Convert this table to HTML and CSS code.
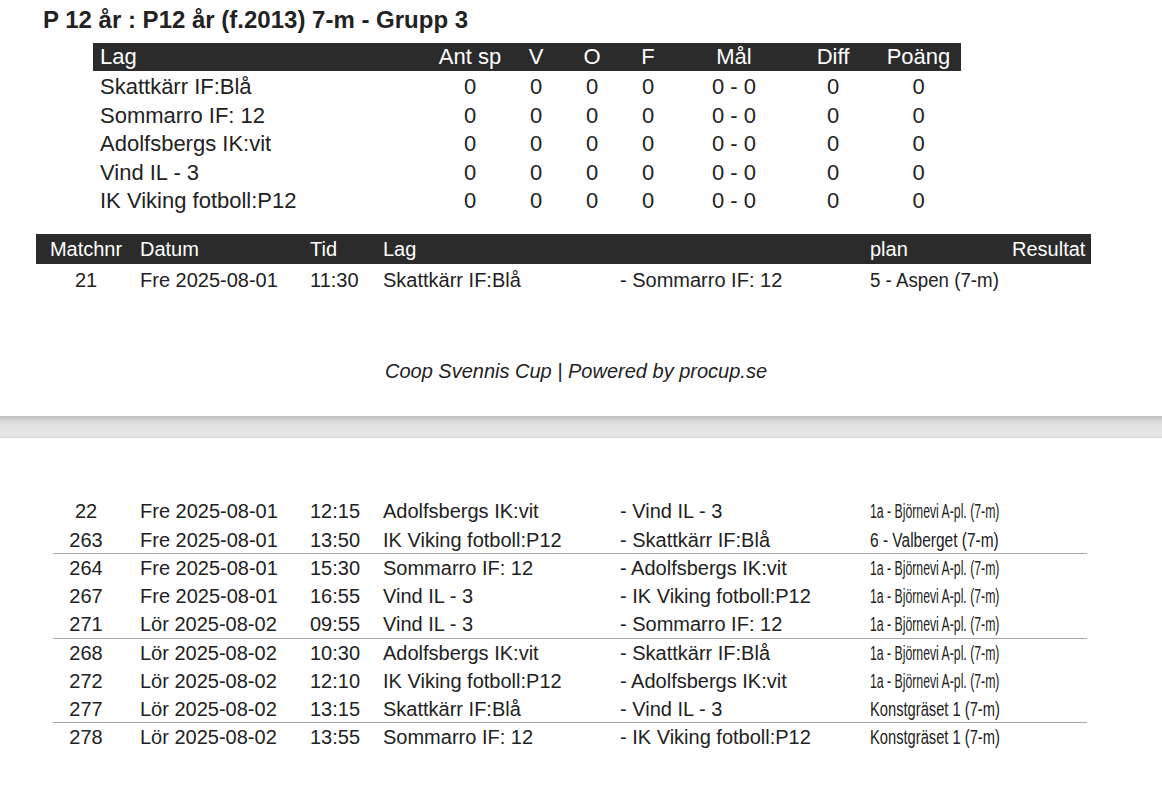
FILE: index.html
```html
<!DOCTYPE html>
<html lang="sv">
<head>
<meta charset="utf-8">
<title>P 12 år : P12 år (f.2013) 7-m - Grupp 3</title>
<link rel="stylesheet" href="styles.css">
</head>
<body>
<section class="page page-one">
  <h1 class="title">P 12 år : P12 år (f.2013) 7-m - Grupp 3</h1>

  <div class="standings">
    <div class="st-row st-head">
      <div class="c-team">Lag</div><div>Ant sp</div><div>V</div><div>O</div><div>F</div><div>Mål</div><div>Diff</div><div>Poäng</div>
    </div>
    <div class="st-body">
      <div class="st-row"><div class="c-team">Skattkärr IF:Blå</div><div>0</div><div>0</div><div>0</div><div>0</div><div>0 - 0</div><div>0</div><div>0</div></div>
      <div class="st-row"><div class="c-team">Sommarro IF: 12</div><div>0</div><div>0</div><div>0</div><div>0</div><div>0 - 0</div><div>0</div><div>0</div></div>
      <div class="st-row"><div class="c-team">Adolfsbergs IK:vit</div><div>0</div><div>0</div><div>0</div><div>0</div><div>0 - 0</div><div>0</div><div>0</div></div>
      <div class="st-row"><div class="c-team">Vind IL - 3</div><div>0</div><div>0</div><div>0</div><div>0</div><div>0 - 0</div><div>0</div><div>0</div></div>
      <div class="st-row"><div class="c-team">IK Viking fotboll:P12</div><div>0</div><div>0</div><div>0</div><div>0</div><div>0 - 0</div><div>0</div><div>0</div></div>
    </div>
  </div>

  <div class="matches">
    <div class="m-row m-head">
      <div class="c-nr">Matchnr</div><div class="c-date">Datum</div><div class="c-time">Tid</div><div class="c-home">Lag</div><div class="c-away"></div><div class="c-plan">plan</div><div class="c-res">Resultat</div>
    </div>
    <div class="m-body first-body">
      <div class="m-row"><div class="c-nr">21</div><div class="c-date">Fre 2025-08-01</div><div class="c-time">11:30</div><div class="c-home">Skattkärr IF:Blå</div><div class="c-away">- Sommarro IF: 12</div><div class="c-plan"><span class="fit fit-aspen">5 - Aspen (7-m)</span></div><div class="c-res"></div></div>
    </div>
  </div>

  <p class="footer">Coop Svennis Cup | Powered by procup.se</p>
</section>

<div class="page-break"></div>

<section class="page page-two">
  <div class="matches">
    <div class="m-body">
      <div class="m-row"><div class="c-nr">22</div><div class="c-date">Fre 2025-08-01</div><div class="c-time">12:15</div><div class="c-home">Adolfsbergs IK:vit</div><div class="c-away">- Vind IL - 3</div><div class="c-plan"><span class="fit fit-bjornevi">1a - Björnevi A-pl. (7-m)</span></div><div class="c-res"></div></div>
      <div class="m-row group-end"><div class="c-nr">263</div><div class="c-date">Fre 2025-08-01</div><div class="c-time">13:50</div><div class="c-home">IK Viking fotboll:P12</div><div class="c-away">- Skattkärr IF:Blå</div><div class="c-plan"><span class="fit fit-valberget">6 - Valberget (7-m)</span></div><div class="c-res"></div></div>
      <div class="m-row"><div class="c-nr">264</div><div class="c-date">Fre 2025-08-01</div><div class="c-time">15:30</div><div class="c-home">Sommarro IF: 12</div><div class="c-away">- Adolfsbergs IK:vit</div><div class="c-plan"><span class="fit fit-bjornevi">1a - Björnevi A-pl. (7-m)</span></div><div class="c-res"></div></div>
      <div class="m-row"><div class="c-nr">267</div><div class="c-date">Fre 2025-08-01</div><div class="c-time">16:55</div><div class="c-home">Vind IL - 3</div><div class="c-away">- IK Viking fotboll:P12</div><div class="c-plan"><span class="fit fit-bjornevi">1a - Björnevi A-pl. (7-m)</span></div><div class="c-res"></div></div>
      <div class="m-row group-end"><div class="c-nr">271</div><div class="c-date">Lör 2025-08-02</div><div class="c-time">09:55</div><div class="c-home">Vind IL - 3</div><div class="c-away">- Sommarro IF: 12</div><div class="c-plan"><span class="fit fit-bjornevi">1a - Björnevi A-pl. (7-m)</span></div><div class="c-res"></div></div>
      <div class="m-row"><div class="c-nr">268</div><div class="c-date">Lör 2025-08-02</div><div class="c-time">10:30</div><div class="c-home">Adolfsbergs IK:vit</div><div class="c-away">- Skattkärr IF:Blå</div><div class="c-plan"><span class="fit fit-bjornevi">1a - Björnevi A-pl. (7-m)</span></div><div class="c-res"></div></div>
      <div class="m-row"><div class="c-nr">272</div><div class="c-date">Lör 2025-08-02</div><div class="c-time">12:10</div><div class="c-home">IK Viking fotboll:P12</div><div class="c-away">- Adolfsbergs IK:vit</div><div class="c-plan"><span class="fit fit-bjornevi">1a - Björnevi A-pl. (7-m)</span></div><div class="c-res"></div></div>
      <div class="m-row group-end"><div class="c-nr">277</div><div class="c-date">Lör 2025-08-02</div><div class="c-time">13:15</div><div class="c-home">Skattkärr IF:Blå</div><div class="c-away">- Vind IL - 3</div><div class="c-plan"><span class="fit fit-konst">Konstgräset 1 (7-m)</span></div><div class="c-res"></div></div>
      <div class="m-row"><div class="c-nr">278</div><div class="c-date">Lör 2025-08-02</div><div class="c-time">13:55</div><div class="c-home">Sommarro IF: 12</div><div class="c-away">- IK Viking fotboll:P12</div><div class="c-plan"><span class="fit fit-konst">Konstgräset 1 (7-m)</span></div><div class="c-res"></div></div>
    </div>
  </div>
</section>
</body>
</html>
```

FILE: styles.css
```css
html, body {
  margin: 0;
  padding: 0;
  background: #ffffff;
}

body {
  font-family: "Liberation Sans", Arial, Helvetica, sans-serif;
  color: #222222;
  width: 1162px;
}

.page-one {
  padding-top: 6px;
}

.title {
  margin: 0 0 0 43px;
  font-size: 24px;
  line-height: 28px;
  font-weight: bold;
  color: #222222;
}

/* Standings table */
.standings {
  margin: 9px 0 0 93px;
  width: 868px;
  font-size: 22px;
}

.st-row {
  display: grid;
  grid-template-columns: 341px 72px 60px 52px 60px 112px 86px 85px;
  line-height: 28.5px;
  height: 28.5px;
  text-align: center;
  white-space: nowrap;
}

.st-row .c-team {
  text-align: left;
  padding-left: 7px;
}

.st-head {
  background: #2b2b2b;
  color: #ffffff;
  height: 28px;
  line-height: 28px;
}

.st-body {
  margin-top: 2px;
}

/* Match table */
.matches {
  margin-left: 36px;
  width: 1055px;
  font-size: 20px;
}

.page-one .matches {
  margin-top: 18.5px;
}

.m-row {
  display: grid;
  grid-template-columns: 100px 170px 73px 237px 250px 146px 79px;
  height: 28.25px;
  line-height: 28.25px;
  white-space: nowrap;
}

.m-head {
  background: #2b2b2b;
  color: #ffffff;
  height: 30px;
  line-height: 30px;
}

.first-body {
  margin-top: 2px;
}

.c-nr {
  text-align: center;
}

.c-date,
.c-time,
.c-home,
.c-away,
.c-plan {
  padding-left: 4px;
}

.c-res {
  text-align: right;
  padding-right: 6px;
}

.group-end {
  background: linear-gradient(#a8a8a8, #a8a8a8) no-repeat 17px 100% / 1034px 1px;
}

/* Plan names squeezed to the column width */
.fit {
  display: inline-block;
  transform-origin: 0 50%;
}

.fit-aspen {
  transform: scaleX(0.935);
}

.fit-bjornevi {
  transform: scaleX(0.613);
}

.fit-valberget {
  transform: scaleX(0.774);
}

.fit-konst {
  transform: scaleX(0.735);
}

.footer {
  margin: 65px 0 0 0;
  font-size: 20px;
  line-height: 24px;
  font-style: italic;
  text-align: center;
  padding-right: 10px;
}

/* Print-preview page break */
.page-break {
  margin-top: 33px;
  height: 22px;
  background: linear-gradient(#bcbcbc 0%, #d6d6d6 20%, #e3e3e3 45%, #e6e6e6 90%, #d2d2d2 100%);
}

.page-two {
  padding-top: 59px;
}
```
